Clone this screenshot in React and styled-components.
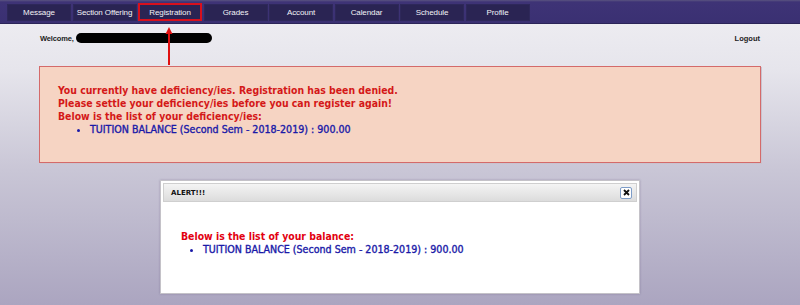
import React from 'react';
import styled, { createGlobalStyle } from 'styled-components';

const GlobalStyle = createGlobalStyle`
	html, body {
		margin: 0;
		padding: 0;
	}
	body {
		width: 800px;
		height: 305px;
		overflow: hidden;
		font-family: 'Liberation Sans', Arial, sans-serif;
		background: linear-gradient(to bottom, #f0eff3 0px, #e6e5ec 70px, #c9c6d6 170px, #aba5c0 305px);
	}
`;

const navItems = ['Message', 'Section Offering', 'Registration', 'Grades', 'Account', 'Calendar', 'Schedule', 'Profile'];

export default function App() {
	return (
		<Page>
			<GlobalStyle />
			<NavBar>
				{navItems.map((item) => (
					<NavItem key={item} $active={item === 'Registration'}>
						{item}
					</NavItem>
				))}
			</NavBar>
			<Arrow>
				<svg width='10' height='40' viewBox='0 0 10 40'>
					<path d='M5 1 L1.5 8 L8.5 8 Z' fill='#e01010' />
					<rect x='4' y='7' width='2' height='32' fill='#e01010' />
				</svg>
			</Arrow>
			<TopRow>
				<Welcome>
					Welcome,
					<Redacted />
				</Welcome>
				<Logout>Logout</Logout>
			</TopRow>
			<WarningBox>
				<RedLine>You currently have deficiency/ies. Registration has been denied.</RedLine>
				<RedLine>Please settle your deficiency/ies before you can register again!</RedLine>
				<RedLine>Below is the list of your deficiency/ies:</RedLine>
				<BalanceList $indent={32}>
					<li>TUITION BALANCE (Second Sem - 2018-2019) : 900.00</li>
				</BalanceList>
			</WarningBox>
			<Dialog>
				<DialogHeader>
					<DialogTitle>ALERT!!!</DialogTitle>
					<CloseButton>
						<svg width='7' height='7' viewBox='0 0 7 7'>
							<path d='M1 1 L6 6 M6 1 L1 6' stroke='#111' strokeWidth='1.8' />
						</svg>
					</CloseButton>
				</DialogHeader>
				<DialogBody>
					<RedLine $bright>Below is the list of your balance:</RedLine>
					<BalanceList $indent={22}>
						<li>TUITION BALANCE (Second Sem - 2018-2019) : 900.00</li>
					</BalanceList>
				</DialogBody>
			</Dialog>
		</Page>
	);
}

const Page = styled.div`
	position: relative;
	display: flex;
	flex-direction: column;
	width: 800px;
	height: 305px;
`;

const NavBar = styled.div`
	display: flex;
	gap: 1.5px;
	height: 24px;
	padding: 4px 0 0 7px;
	box-sizing: border-box;
	background: linear-gradient(to bottom, #5a5480 0px, #3e3376 2px, #3a3072 24px);
	border-bottom: 1px solid #2b2458;
`;

const NavItem = styled.div`
	width: 64px;
	box-sizing: border-box;
	display: flex;
	align-items: center;
	justify-content: center;
	background: #2a2453;
	color: #f2f2f6;
	font-size: 8px;
	letter-spacing: -0.1px;
	border: ${(p) => (p.$active ? '2px solid #d8101c' : '1px solid #2e285a')};
	margin-top: ${(p) => (p.$active ? '-1px' : '0')};
	height: ${(p) => (p.$active ? '18px' : '17px')};
`;

const Arrow = styled.div`
	position: absolute;
	left: 164px;
	top: 26px;
	line-height: 0;
`;

const TopRow = styled.div`
	display: flex;
	justify-content: space-between;
	align-items: center;
	padding: 8px 40px 0 40px;
	height: 12px;
`;

const Welcome = styled.div`
	display: flex;
	align-items: center;
	gap: 2px;
	font-size: 7.5px;
	font-weight: bold;
	color: #222;
	letter-spacing: -0.15px;
`;

const Redacted = styled.span`
	display: inline-block;
	width: 136px;
	height: 10px;
	border-radius: 5px;
	background: #000;
`;

const Logout = styled.div`
	font-size: 7.5px;
	font-weight: bold;
	color: #222;
`;

const WarningBox = styled.div`
	margin: 22px 39px 0 39px;
	height: 97px;
	box-sizing: border-box;
	padding: 17px 18px 0 18px;
	background: #f6d4c3;
	border: 1px solid #d46a6a;
	box-shadow: 1px 1px 0 #c9c3cf;
`;

const RedLine = styled.div`
	font-family: 'DejaVu Sans Condensed', 'DejaVu Sans', sans-serif;
	font-weight: bold;
	font-size: 10.4px;
	line-height: 13px;
	color: ${(p) => (p.$bright ? '#e20010' : '#d41818')};
`;

const BalanceList = styled.ul`
	margin: 0;
	padding-left: ${(p) => p.$indent}px;
	font-family: 'DejaVu Sans Condensed', 'DejaVu Sans', sans-serif;
	font-weight: normal;
	font-size: 10.6px;
	line-height: 13px;
	color: #1a1aa8;
	-webkit-text-stroke: 0.35px #1a1aa8;
	li {
		list-style: disc;
	}
`;

const Dialog = styled.div`
	margin: 17px auto 0 auto;
	width: 480px;
	height: 114px;
	box-sizing: border-box;
	background: #fff;
	border: 1px solid #c4c2c8;
	box-shadow: 0 0 2px rgba(80, 70, 110, 0.35);
	padding: 2px;
	display: flex;
	flex-direction: column;
`;

const DialogHeader = styled.div`
	display: flex;
	align-items: center;
	justify-content: space-between;
	height: 17px;
	padding: 0 4px 0 7px;
	background: linear-gradient(to bottom, #f4f4f4, #dcdcdc);
	border: 1px solid #cfcfcf;
`;

const DialogTitle = styled.div`
	font-family: 'DejaVu Sans', sans-serif;
	font-size: 7px;
	font-weight: bold;
	color: #111;
`;

const CloseButton = styled.div`
	width: 10px;
	height: 10px;
	display: flex;
	align-items: center;
	justify-content: center;
	background: #fff;
	border: 1px solid #7d9cc8;
	border-radius: 2px;
`;

const DialogBody = styled.div`
	padding: 28px 18px 0 18px;
`;
